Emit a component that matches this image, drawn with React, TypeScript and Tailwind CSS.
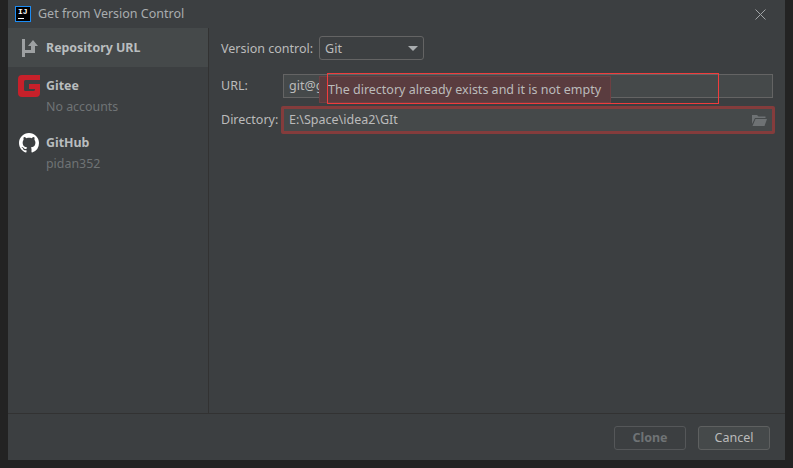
const font = "font-['Noto_Sans',sans-serif]";

const GiteeIcon = () => (
  <svg width="22" height="22" viewBox="0 0 22 22" className="shrink-0">
    <path
      d="M4 0H22V5H7.5Q6 5 6 6.5V14.5Q6 16 7.5 16H15.5Q17 16 17 14.5V14H11V9H22V18Q22 22 18 22H4Q0 22 0 18V4Q0 0 4 0Z"
      fill="#c7202a"
    />
  </svg>
);

const GithubIcon = () => (
  <svg width="20" height="20" viewBox="0 0 16 16" className="shrink-0">
    <path
      fill="#ffffff"
      d="M8 0C3.58 0 0 3.58 0 8c0 3.54 2.29 6.53 5.47 7.59.4.07.55-.17.55-.38 0-.19-.01-.82-.01-1.49-2.01.37-2.53-.49-2.69-.94-.09-.23-.48-.94-.82-1.13-.28-.15-.68-.52-.01-.53.63-.01 1.08.58 1.23.82.72 1.21 1.87.87 2.33.66.07-.52.28-.87.51-1.07-1.78-.2-3.64-.89-3.64-3.95 0-.87.31-1.59.82-2.15-.08-.2-.36-1.02.08-2.12 0 0 .67-.21 2.2.82.64-.18 1.32-.27 2-.27.68 0 1.36.09 2 .27 1.53-1.04 2.2-.82 2.2-.82.44 1.1.16 1.92.08 2.12.51.56.82 1.27.82 2.15 0 3.07-1.87 3.75-3.65 3.95.29.25.54.73.54 1.48 0 1.07-.01 1.93-.01 2.2 0 .21.15.46.55.38A8.013 8.013 0 0016 8c0-4.42-3.58-8-8-8z"
    />
  </svg>
);

const RepoIcon = () => (
  <svg width="16" height="18" viewBox="0 0 16 18" className="shrink-0" fill="#9da0a2">
    <path d="M0 0H3V18H0Z" />
    <path d="M3 11H9V7H6L11 1L16 7H13V14H3Z" />
  </svg>
);

const FolderIcon = () => (
  <svg width="15" height="11" viewBox="0 0 15 11" fill="#6e7274">
    <path d="M0 0H5L6.5 1.5H13.5V3H3L0 9Z" />
    <path d="M3.5 4H15L12.5 11H0.5Z" />
  </svg>
);

const App = () => {
  return (
    <div className={`h-[468px] w-[793px] overflow-hidden bg-[#232323] px-[8px] pb-[8px] ${font}`}>
      <div className="relative flex h-[460px] w-[777px] flex-col bg-[#3c3f41] text-[12.5px] text-[#bbbbbb]">
        {/* title bar */}
        <div className="flex h-[28px] shrink-0 items-center pl-[7px] pr-[19px]">
          <div className="flex h-[16px] w-[16px] flex-col justify-between border border-[#1c8cf5] bg-black pl-[2px] pt-[1px]">
            <span className="font-['Liberation_Mono',monospace] text-[8px] font-bold leading-[8px] text-white">IJ</span>
            <span className="mb-[2px] h-px w-[6px] bg-white" />
          </div>
          <span className="ml-[7px] text-[#a9adaf]">Get from Version Control</span>
          <svg width="11" height="11" viewBox="0 0 11 11" className="ml-auto" stroke="#a0a3a5" strokeWidth="1" fill="none">
            <path d="M0.5 0.5L10.5 10.5M10.5 0.5L0.5 10.5" />
          </svg>
        </div>

        <div className="flex min-h-0 flex-1">
          {/* sidebar */}
          <div className="w-[201px] shrink-0 border-r border-[#323232] text-[12.4px]">
            <div className="flex h-[39px] items-center gap-[8px] bg-[#45494a] pl-[14px] font-bold text-[#b9bdbf]">
              <RepoIcon />
              <span className="pt-[2px]">Repository URL</span>
            </div>
            <div className="flex gap-[6px] pl-[10px] pt-[8px]">
              <GiteeIcon />
              <div className="flex flex-col pt-px">
                <span className="font-bold leading-[20px] text-[#b9bdbf]">Gitee</span>
                <span className="mt-[1px] leading-[20px] text-[#6f7375]">No accounts</span>
              </div>
            </div>
            <div className="flex gap-[7px] pl-[11px] pt-[16px]">
              <GithubIcon />
              <div className="flex flex-col">
                <span className="font-bold leading-[20px] text-[#b9bdbf]">GitHub</span>
                <span className="leading-[22px] text-[#6f7375]">pidan352</span>
              </div>
            </div>
          </div>

          {/* form */}
          <div className="flex flex-1 flex-col px-[12px] pt-[8px]">
            <div className="flex h-[24px] items-center gap-[6px]">
              <span className="pt-[2px]">Version control:</span>
              <div className="flex h-[24px] w-[105px] items-center justify-between rounded-[3px] border border-[#646464] pl-[5px] pr-[5px]">
                <span className="pt-[2px]">Git</span>
                <span className="h-0 w-0 border-x-[5px] border-t-[5px] border-x-transparent border-t-[#a9adaf]" />
              </div>
            </div>
            <div className="mt-[14px] flex h-[24px] items-center">
              <span className="w-[62px] shrink-0">URL:</span>
              <div className="flex h-[24px] flex-1 items-center border border-[#646464] bg-[#45494a] pl-[5px]">
                git@g
              </div>
            </div>
            <div className="mt-[8px] flex h-[28px] items-center">
              <span className="w-[60px] shrink-0 pt-px">Directory:</span>
              <div className="-mr-[2px] flex h-[28px] flex-1 items-center justify-between rounded-[2px] border-[3px] border-[#843c3c] bg-[#45494a] pl-[5px] pr-[5px]">
                <span>E:\Space\idea2\GIt</span>
                <FolderIcon />
              </div>
            </div>
          </div>
        </div>

        {/* buttons */}
        <div className="flex h-[47px] shrink-0 items-center justify-end gap-[12px] border-t border-[#323232] pr-[15px] pt-[1px]">
          <button className="h-[24px] w-[72px] rounded-[3px] border border-[#555759] pt-[2px] font-bold text-[#6f7375]">Clone</button>
          <button className="h-[24px] w-[72px] rounded-[3px] border border-[#5e6060] bg-[#45494a] pt-[2px] text-[#bbbbbb]">Cancel</button>
        </div>

        {/* validation tooltip */}
        <div className="absolute left-[311px] top-[76px] flex h-[27px] w-[292px] items-center whitespace-nowrap border border-[#6e3f42] bg-[#5a3c3f] pl-[8px] pt-[2px] text-[#bbbbbb]">
          The directory already exists and it is not empty
        </div>
        <div className="absolute left-[319px] top-[73px] h-[31px] w-[392px] border border-[#f03c3c]" />
      </div>
    </div>
  );
};

export default App;
